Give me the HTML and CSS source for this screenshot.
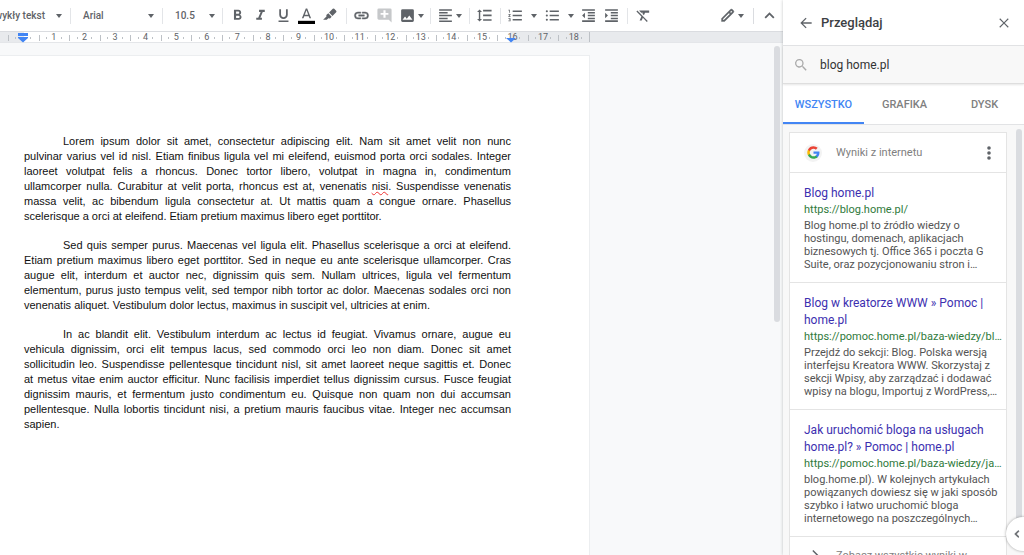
FILE: index.html
```html
<!DOCTYPE html>
<html lang="pl">
<head>
<meta charset="utf-8">
<title>Dokument</title>
<link rel="stylesheet" href="styles.css">
</head>
<body>
<div class="app">
  <div class="editor">
    <div class="toolbar" role="toolbar" aria-label="Formatowanie">
      <div class="group group-style"><button class="pick"><span>Zwykły tekst</span><i class="caret"></i></button></div>
      <div class="group group-font"><button class="pick"><span>Arial</span><i class="caret"></i></button></div>
      <div class="group group-size"><button class="pick"><span>10.5</span><i class="caret"></i></button></div>
      <div class="group group-text">
        <button class="tool" aria-label="Pogrubienie"><svg viewBox="0 0 24 24"><path d="M15.600 10.800c1-.7 1.600-1.800 1.600-2.800 0-2.300-1.700-4-4-4H7v14h7c2.100 0 3.700-1.700 3.700-3.800 0-1.500-.9-2.800-2.100-3.400zM10 6.500h3a1.500 1.500 0 0 1 0 3h-3zm3.500 9H10v-3h3.500a1.500 1.500 0 0 1 0 3z"/></svg></button>
        <button class="tool" aria-label="Kursywa"><svg viewBox="0 0 24 24"><path d="M10 4v3h2.200l-3.400 8H6v3h8v-3h-2.200l3.400-8H18V4z"/></svg></button>
        <button class="tool" aria-label="Podkreślenie"><svg viewBox="0 0 24 24"><path d="M12 17a6 6 0 0 0 6-6V3h-2.500v8a3.500 3.500 0 0 1-7 0V3H6v8a6 6 0 0 0 6 6zm-7 2v2h14v-2z"/></svg></button>
        <button class="tool" aria-label="Kolor tekstu"><svg viewBox="0 0 24 24"><path d="M11 2 5.500 16h2.250l1.120-3h6.250l1.120 3h2.250L13 2zm-1.380 9L12 4.670 14.380 11z"/><path fill="#000" d="M0 19.500h24V24H0z"/></svg></button>
        <button class="tool" aria-label="Kolor wyróżnienia"><svg viewBox="0 0 24 24"><path d="M16.600 2.600a1.500 1.500 0 0 1 2.100 0l2.700 2.700a1.500 1.500 0 0 1 0 2.100l-5.200 5.200-4.800-4.800zM10.300 8.900l4.800 4.800-2.400 2.400-2.400-.3L8.200 18H3l4.700-4.700-.2-2z"/></svg></button>
      </div>
      <div class="group group-insert">
        <button class="tool" aria-label="Wstaw link"><svg viewBox="0 0 24 24"><path d="M3.900 12c0-1.710 1.390-3.100 3.100-3.100h4V7H7a5 5 0 0 0 0 10h4v-1.900H7A3.100 3.100 0 0 1 3.900 12zM8 13h8v-2H8zm9-6h-4v1.900h4a3.100 3.100 0 0 1 0 6.200h-4V17h4a5 5 0 0 0 0-10z" stroke="#5f6368" stroke-width=".6"/></svg></button>
        <button class="tool faded" aria-label="Dodaj komentarz" disabled><svg viewBox="0 0 24 24"><path d="M22 4a2 2 0 0 0-2-2H4a2 2 0 0 0-2 2v12c0 1.100.9 2 2 2h14l4 4zm-4.500 7h-4v4h-3v-4h-4V8.500h4v-4h3v4h4z"/></svg></button>
        <button class="tool wide" aria-label="Wstaw obraz"><svg viewBox="0 0 24 24"><path d="M21 19V5a2 2 0 0 0-2-2H5a2 2 0 0 0-2 2v14c0 1.100.9 2 2 2h14a2 2 0 0 0 2-2zM8.500 13.500l2.500 3 3.500-4.500 4.500 6H5z"/></svg><i class="caret"></i></button>
      </div>
      <div class="group group-align"><button class="tool wide" aria-label="Wyrównanie"><svg viewBox="0 0 24 24"><path d="M3 3h18v2.200H3zm0 4h12v2.200H3zm0 4h18v2.200H3zm0 4h12v2.200H3zm0 4h18v2.200H3z"/></svg><i class="caret"></i></button></div>
      <div class="group group-spacing"><button class="tool" aria-label="Interlinia"><svg viewBox="0 0 24 24"><path d="M6 7h2.500L5 3.500 1.500 7H4v10H1.500L5 20.500 8.500 17H6zm4-3v2.300h12V4zm0 15.500h12v-2.300H10zm0-6.600h12v-2.300H10z"/></svg></button></div>
      <div class="group group-lists">
        <button class="tool split" aria-label="Lista numerowana"><svg viewBox="0 0 24 24"><path d="M2 17h2v.5H3v1h1v.5H2v1h3v-4H2zm1-9h1V4H2v1h1zm-1 3h1.800L2 13.100v.9h3v-1H3.200L5 10.900V10H2zm6-6v2.200h13V5zm0 14.200h13V17H8zm0-6h13V11H8z"/></svg><i class="caret"></i></button>
        <button class="tool split" aria-label="Lista wypunktowana"><svg viewBox="0 0 24 24"><path d="M4 10.500a1.500 1.500 0 1 0 0 3 1.500 1.500 0 0 0 0-3zm0-6a1.500 1.500 0 1 0 0 3 1.500 1.500 0 0 0 0-3zm0 12a1.500 1.500 0 1 0 0 3 1.500 1.500 0 0 0 0-3zM8 19.200h13V17H8zm0-6h13V11H8zM8 5v2.200h13V5z"/></svg><i class="caret"></i></button>
        <button class="tool" aria-label="Zmniejsz wcięcie"><svg viewBox="0 0 24 24"><path d="M11 17.200h10V15H11zM3 12l4 4V8zm0 9h18v-2.200H3zM3 3v2.200h18V3zm8 6.200h10V7H11zm0 4h10V11H11z"/></svg></button>
        <button class="tool" aria-label="Zwiększ wcięcie"><svg viewBox="0 0 24 24"><path d="M3 21h18v-2.200H3zM3 8v8l4-4zm8 9.200h10V15H11zM3 3v2.200h18V3zm8 6.200h10V7H11zm0 4h10V11H11z"/></svg></button>
      </div>
      <div class="group group-clear"><button class="tool" aria-label="Wyczyść formatowanie"><svg viewBox="0 0 24 24"><path d="M3.300 5 2 6.300l7 7L6.500 19h3l1.600-3.700L16.700 21l1.300-1.300zM6 5v.2L8.800 8h2.400l-.7 1.700 2.100 2.100L14.200 8H20V5z"/></svg></button></div>
      <div class="group group-mode"><button class="tool wide" aria-label="Tryb edycji"><svg viewBox="0 0 24 24"><path d="M20.400 4.900l-1.300-1.300a2.200 2.200 0 0 0-3.100 0L3.500 16.100V20.500h4.400L20.400 8a2.200 2.200 0 0 0 0-3.100zM7 18.500H5.500V17L14 8.500 15.500 10zM17 8.500 15.500 7l1.800-1.800 1.500 1.500z" stroke="#5f6368" stroke-width=".5"/></svg><i class="caret"></i></button></div>
      <div class="group group-hide"><button class="tool" aria-label="Ukryj menu"><svg viewBox="0 0 24 24"><path d="M12 7.500l-7 7 1.800 1.800 5.200-5.200 5.200 5.200 1.800-1.800z"/></svg></button></div>
    </div>
    <div class="ruler">
      <ol class="marks">
        <li class="zero"></li><li>1</li><li>2</li><li>3</li><li>4</li><li>5</li><li>6</li><li>7</li><li>8</li><li>9</li><li>10</li><li>11</li><li>12</li><li>13</li><li>14</li><li>15</li><li>16</li><li>17</li><li>18</li>
      </ol>
      <svg class="marker marker-left" viewBox="0 0 10 10"><path d="M0 0h10v3H0zM0 4h10v1L5 9.500 0 5z"/></svg>
      <svg class="marker marker-right" viewBox="0 0 10 10"><path d="M0 5h10L5 9.500z"/></svg>
    </div>
    <div class="canvas">
      <main class="page">
        <p>Lorem ipsum dolor sit amet, consectetur adipiscing elit. Nam sit amet velit non nunc<br>
        pulvinar varius vel id nisl. Etiam finibus ligula vel mi eleifend, euismod porta orci sodales. Integer<br>
        laoreet volutpat felis a rhoncus. Donec tortor libero, volutpat in magna in, condimentum<br>
        ullamcorper nulla. Curabitur at velit porta, rhoncus est at, venenatis <span class="misspelt">nisi</span>. Suspendisse venenatis<br>
        massa velit, ac bibendum ligula consectetur at. Ut mattis quam a congue ornare. Phasellus
        <span class="last">scelerisque a orci at eleifend. Etiam pretium maximus libero eget porttitor.</span></p>
        <p>Sed quis semper purus. Maecenas vel ligula elit. Phasellus scelerisque a orci at eleifend.<br>
        Etiam pretium maximus libero eget porttitor. Sed in neque eu ante scelerisque ullamcorper. Cras<br>
        augue elit, interdum et auctor nec, dignissim quis sem. Nullam ultrices, ligula vel fermentum<br>
        elementum, purus justo tempus velit, sed tempor nibh tortor ac dolor. Maecenas sodales orci non
        <span class="last">venenatis aliquet. Vestibulum dolor lectus, maximus in suscipit vel, ultricies at enim.</span></p>
        <p>In ac blandit elit. Vestibulum interdum ac lectus id feugiat. Vivamus ornare, augue eu<br>
        vehicula dignissim, orci elit tempus lacus, sed commodo orci leo non diam. Donec sit amet<br>
        sollicitudin leo. Suspendisse pellentesque tincidunt nisl, sit amet laoreet neque sagittis et. Donec<br>
        at metus vitae enim auctor efficitur. Nunc facilisis imperdiet tellus dignissim cursus. Fusce feugiat<br>
        dignissim mauris, et fermentum justo condimentum eu. Quisque non quam non dui accumsan<br>
        pellentesque. Nulla lobortis tincidunt nisi, a pretium mauris faucibus vitae. Integer nec accumsan
        <span class="last">sapien.</span></p>
      </main>
      <div class="scroll"></div>
    </div>
  </div>
  <aside class="explore">
    <header class="explore-head">
      <button class="plain" aria-label="Wstecz"><svg viewBox="0 0 24 24"><path d="M20.500 11H7.300l5.600-5.600L11.500 4l-8 8 8 8 1.400-1.400L7.300 13h13.200z"/></svg></button>
      <h1>Przeglądaj</h1>
      <button class="plain close" aria-label="Zamknij"><svg viewBox="0 0 24 24"><path d="M19 6.200 17.800 5 12 10.800 6.200 5 5 6.200 10.800 12 5 17.800 6.200 19l5.800-5.800 5.800 5.800 1.200-1.200-5.800-5.800z"/></svg></button>
    </header>
    <label class="search">
      <svg viewBox="0 0 24 24"><path d="M15.500 14h-.79l-.28-.27a6.500 6.500 0 1 0-.7.7l.27.28v.79l5 5L20.500 19zm-6 0a4.500 4.500 0 1 1 0-9 4.500 4.500 0 0 1 0 9z"/></svg>
      <input type="text" value="blog home.pl" aria-label="Szukaj">
    </label>
    <nav class="tabs">
      <button class="tab active">WSZYSTKO</button>
      <button class="tab">GRAFIKA</button>
      <button class="tab">DYSK</button>
    </nav>
    <div class="results">
      <section class="card">
        <div class="card-head">
          <span class="logo"><svg viewBox="0 0 48 48"><path fill="#4285f4" d="M46 24.500c0-1.600-.1-3.100-.4-4.500H24v8.500h12.400c-.5 2.900-2.200 5.300-4.600 7v5.700h7.400C43.500 37.200 46 31.400 46 24.500z"/><path fill="#34a853" d="M24 47c6.200 0 11.400-2 15.200-5.600l-7.400-5.700c-2 1.400-4.700 2.200-7.800 2.200-6 0-11-4-12.900-9.500H3.500v5.900A23 23 0 0 0 24 47z"/><path fill="#fbbc05" d="M11.100 28.400a13.800 13.800 0 0 1 0-8.800v-5.900H3.500a23 23 0 0 0 0 20.600z"/><path fill="#ea4335" d="M24 10.100c3.400 0 6.400 1.200 8.800 3.400l6.600-6.600A22 22 0 0 0 24 1 23 23 0 0 0 3.500 13.700l7.600 5.900C13 14.100 18 10.100 24 10.100z"/></svg></span>
          <h2>Wyniki z internetu</h2>
          <button class="plain" aria-label="Więcej"><svg viewBox="0 0 24 24"><circle cx="12" cy="4.500" r="2.700"/><circle cx="12" cy="12" r="2.700"/><circle cx="12" cy="19.500" r="2.700"/></svg></button>
        </div>
        <article class="result">
          <a class="title" href="#r1">Blog home.pl</a>
          <cite>https://blog.home.pl/</cite>
          <p>Blog home.pl to źródło wiedzy o hostingu, domenach, aplikacjach biznesowych tj. Office 365 i poczta G Suite, oraz pozycjonowaniu stron i…</p>
        </article>
        <article class="result">
          <a class="title" href="#r2">Blog w kreatorze WWW » Pomoc | home.pl</a>
          <cite>https://pomoc.home.pl/baza-wiedzy/bl…</cite>
          <p>Przejdź do sekcji: Blog. Polska wersją interfejsu Kreatora WWW. Skorzystaj z sekcji Wpisy, aby zarządzać i dodawać wpisy na blogu, Importuj z WordPress,…</p>
        </article>
        <article class="result">
          <a class="title" href="#r3">Jak uruchomić bloga na usługach home.pl? » Pomoc | home.pl</a>
          <cite>https://pomoc.home.pl/baza-wiedzy/ja…</cite>
          <p>blog.home.pl). W kolejnych artykułach powiązanych dowiesz się w jaki sposób szybko i łatwo uruchomić bloga internetowego na poszczególnych…</p>
        </article>
        <a class="more" href="#all"><svg viewBox="0 0 24 24"><path d="M3.500 11h13.200l-5.600-5.600L12.500 4l8 8-8 8-1.400-1.400 5.600-5.600H3.500z"/></svg><span>Zobacz wszystkie wyniki w</span></a>
      </section>
      <div class="scroll"></div>
    </div>
    <button class="collapse" aria-label="Ukryj panel boczny"><svg viewBox="0 0 24 24"><path d="M15.500 7.400 14 6l-6 6 6 6 1.500-1.400-4.600-4.600z" stroke="#5f6368"/></svg></button>
  </aside>
</div>
</body>
</html>
```

FILE: styles.css
```css
* { box-sizing: border-box; }
body { margin: 0; font-family: Roboto, "Liberation Sans", sans-serif; color: #3c4043; }
button, input { font: inherit; color: inherit; background: none; border: 0; padding: 0; margin: 0; }
svg { fill: #5f6368; display: block; flex: none; }
h1, h2, p, ol { margin: 0; padding: 0; }

.app { display: grid; grid-template-columns: minmax(0, 1fr) 241px; height: 100vh; overflow: hidden; }
.editor { display: flex; flex-direction: column; min-width: 0; min-height: 0; }

.toolbar { display: flex; align-items: center; height: 32px; flex: none; border-bottom: 1px solid #dadce0; overflow: hidden; }
.group { display: flex; align-items: center; flex: none; height: 16px; border-right: 1px solid #e3e5e8; }
.pick { display: flex; flex: 1; align-items: center; justify-content: space-between; font-size: 10px; font-weight: 500; color: #5f6368; white-space: nowrap; }
.caret { flex: none; border: 3px solid transparent; border-top: 4px solid #5f6368; border-bottom: 0; }
.tool { display: flex; align-items: center; justify-content: center; width: 23px; height: 22px; }
.tool svg { width: 17px; height: 17px; }
.wide { justify-content: flex-start; width: 34px; gap: 2px; padding-left: 3px; }
.split { width: 37px; gap: 7px; }
.faded svg { fill: #c6c8ca; }
.group-style { width: 71px; padding-right: 8px; justify-content: flex-end; }
.group-style .pick { flex: none; gap: 11px; }
.group-font { width: 92px; padding: 0 8px 0 12px; }
.group-size { width: 60px; padding: 0 7px 0 12px; }
.group-text { width: 124px; padding-left: 3px; }
.group-insert { width: 84px; padding-left: 3px; }
.group-align { width: 39px; padding-left: 3px; }
.group-spacing { width: 31px; padding-left: 3px; }
.group-lists { width: 127px; padding-left: 2px; }
.group-clear { width: 30px; padding-left: 4px; border: 0; }
.group-mode { margin-left: auto; width: 38px; border-color: #dadce0; }
.group-hide { width: 29px; padding-left: 4px; border: 0; }

.ruler { position: relative; flex: none; height: 11px; border-bottom: 1px solid #e4e6e9; background: linear-gradient(90deg, #e8eaed 24px, #fff 24px, #fff 510px, #e8eaed 510px); }
.marks { display: grid; grid-template-columns: repeat(19, 1fr); width: 582px; margin-left: 8px; list-style: none; border-right: 1px solid #bdc1c6; height: 10px; }
.marks li { height: 10px; font-size: 9px; line-height: 11px; text-align: center; color: #5f6368; background: linear-gradient(#bdc1c6, #bdc1c6) 0 3px / 1px 6px no-repeat, linear-gradient(#bdc1c6, #bdc1c6) 25% 5px / 1px 2px no-repeat, linear-gradient(#bdc1c6, #bdc1c6) 75% 5px / 1px 2px no-repeat; }
.marker { position: absolute; top: 1px; width: 10px; height: 10px; fill: #4285f4; }
.marker-left { left: 18px; }
.marker-right { left: 506px; }

.canvas { position: relative; flex: 1; min-height: 0; padding: 12px 193px 0 0; background: #f8f9fa; }
.page { height: 100%; padding: 78px 78px 0 24px; background: #fff; border: solid #eceef0; border-width: 1px 1px 0 0; font: 11px/15px "Liberation Sans", Arial, sans-serif; color: #111; text-align: justify; text-align-last: justify; }
.page p { text-indent: 39px; margin-bottom: 14px; }
.last { display: block; text-indent: 0; text-align-last: left; }
.misspelt { text-decoration: underline wavy #e33 1px; text-underline-offset: 1px; text-decoration-skip-ink: none; }
.canvas .scroll { position: absolute; top: 3px; right: 3px; width: 6px; height: 276px; border-radius: 3px; background: #dadce0; }

.explore { position: relative; display: flex; flex-direction: column; min-height: 0; background: #fff; box-shadow: 0 0 3px rgba(60, 64, 67, .3); }
.explore-head { display: flex; align-items: center; height: 46px; flex: none; padding: 0 12px 0 15px; border-bottom: 1px solid #e2e3e5; }
.plain svg { width: 16px; height: 16px; }
h1 { flex: 1; margin-left: 7px; font-size: 13px; font-weight: 500; color: #3c4043; }
.search { display: flex; align-items: center; gap: 11px; height: 38px; flex: none; padding: 0 10px; background: #f8f8f8; border-bottom: 1px solid #dedede; box-shadow: 0 1px 2px rgba(0, 0, 0, .1); }
.search svg { width: 16px; height: 16px; fill: #aaa; }
.search input { flex: 1; min-width: 0; font-size: 12px; color: #333; }
.tabs { display: grid; grid-template-columns: 81px 81px 1fr; height: 41px; flex: none; border-bottom: 1px solid #e2e3e5; }
.tab { padding-top: 2px; font-size: 11px; font-weight: 500; color: #808080; border-bottom: 2px solid transparent; }
.active { color: #4285f4; border-color: #4285f4; }
.results { position: relative; flex: 1; min-height: 0; overflow: hidden; padding: 7px 17px 0 6px; background: #f8f8f8; }
.card { background: #fff; border: 1px solid #e4e4e4; }
.card-head { display: flex; align-items: center; height: 39px; padding: 0 9px 0 14px; }
.logo { display: grid; place-items: center; width: 18px; height: 18px; border-radius: 50%; background: #f3f3f3; }
.logo svg { width: 13px; height: 13px; }
h2 { flex: 1; margin-left: 14px; font-size: 11px; font-weight: 400; color: #808080; }
.result { padding: 12px 6px 11px 14px; border-top: 1px solid #e4e4e4; }
.title { display: block; font-size: 12px; line-height: 17px; color: #3c2fb0; text-decoration: none; }
cite { display: block; font-size: 11px; line-height: 16px; font-style: normal; color: #2f7a3b; white-space: nowrap; }
.result p { margin-top: 1px; font-size: 11px; line-height: 13px; color: #545454; }
.more { display: flex; gap: 14px; height: 40px; padding: 10px 14px; border-top: 1px solid #e4e4e4; font-size: 11px; line-height: 18px; color: #808080; text-decoration: none; white-space: nowrap; }
.more svg { width: 18px; height: 18px; }
.results .scroll { position: absolute; top: 4px; right: 2px; width: 6px; bottom: 24px; border-radius: 3px; background: #dadce0; }
.collapse { position: absolute; right: -16px; bottom: 4px; display: flex; align-items: center; width: 34px; height: 34px; padding-left: 4px; border-radius: 50%; background: #fff; box-shadow: 0 0 3px rgba(0, 0, 0, .35); }
.collapse svg { width: 14px; height: 14px; }
```
